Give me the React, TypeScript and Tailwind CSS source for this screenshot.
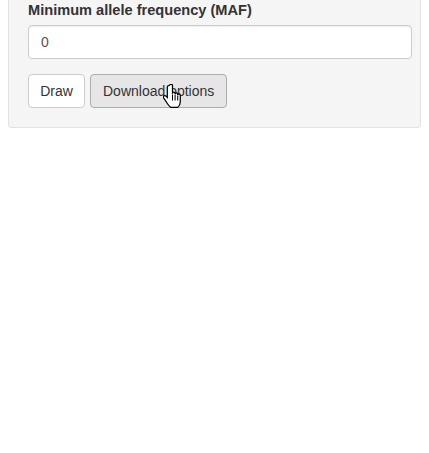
import React from "react";

function HandCursor() {
  return (
    <svg
      width="19"
      height="27"
      viewBox="0 0 18 26"
      className="absolute left-[163px] top-[84px] pointer-events-none"
    >
      <path
        d="M5.5 1.5c-.8 0-1.5.7-1.5 1.5v10l-1.2-1.3c-.7-.7-1.8-.7-2.3 0-.5.6-.4 1.4.1 2l3.6 5.3c.9 1.4 2 2.7 3.3 3.5h6.5c1.6-1.3 2.5-3.2 2.5-5.3v-6.2c0-.8-.6-1.4-1.3-1.4s-1.2.6-1.2 1.4v-1c0-.8-.6-1.4-1.3-1.4s-1.2.6-1.2 1.4v-.7c0-.8-.6-1.4-1.3-1.4s-1.2.6-1.2 1.4v-7.7c0-.8-.7-1.5-1.5-1.5z"
        fill="#fff"
        stroke="#000"
        strokeWidth="1.2"
      />
      <path d="M9 10v6M11.5 10.5v5.5M14 11.5v4.5" stroke="#000" strokeWidth="1" />
    </svg>
  );
}

export default function App() {
  return (
    <div className="relative min-h-[453px] bg-white font-['Liberation_Sans',Arial,sans-serif] text-[14px] text-[#333]">
      <div className="mx-2 border-x border-b border-[#e3e3e3] rounded-b bg-[#f5f5f5] pl-[19px] pr-[8px] pb-[19px]">
        {/* MAF input */}
        <div className="mb-[15px]">
          <label className="block font-bold text-[14.6px] leading-[21px] mb-[4px]">
            Minimum allele frequency (MAF)
          </label>
          <input
            type="text"
            defaultValue="0"
            className="block w-full h-[34px] px-3 rounded border border-[#ccc] bg-white text-[#555] text-[14px] shadow-[inset_0_1px_1px_rgba(0,0,0,0.075)] outline-none"
          />
        </div>

        <div className="flex gap-[5px]">
          <button className="h-[34px] w-[57px] rounded border border-[#ccc] bg-white text-[#333] leading-5 text-center">
            Draw
          </button>
          <button className="h-[34px] px-3 rounded border border-[#adadad] bg-[#e6e6e6] text-[#333] leading-5">
            Download options
          </button>
        </div>
      </div>
      <HandCursor />
    </div>
  );
}
